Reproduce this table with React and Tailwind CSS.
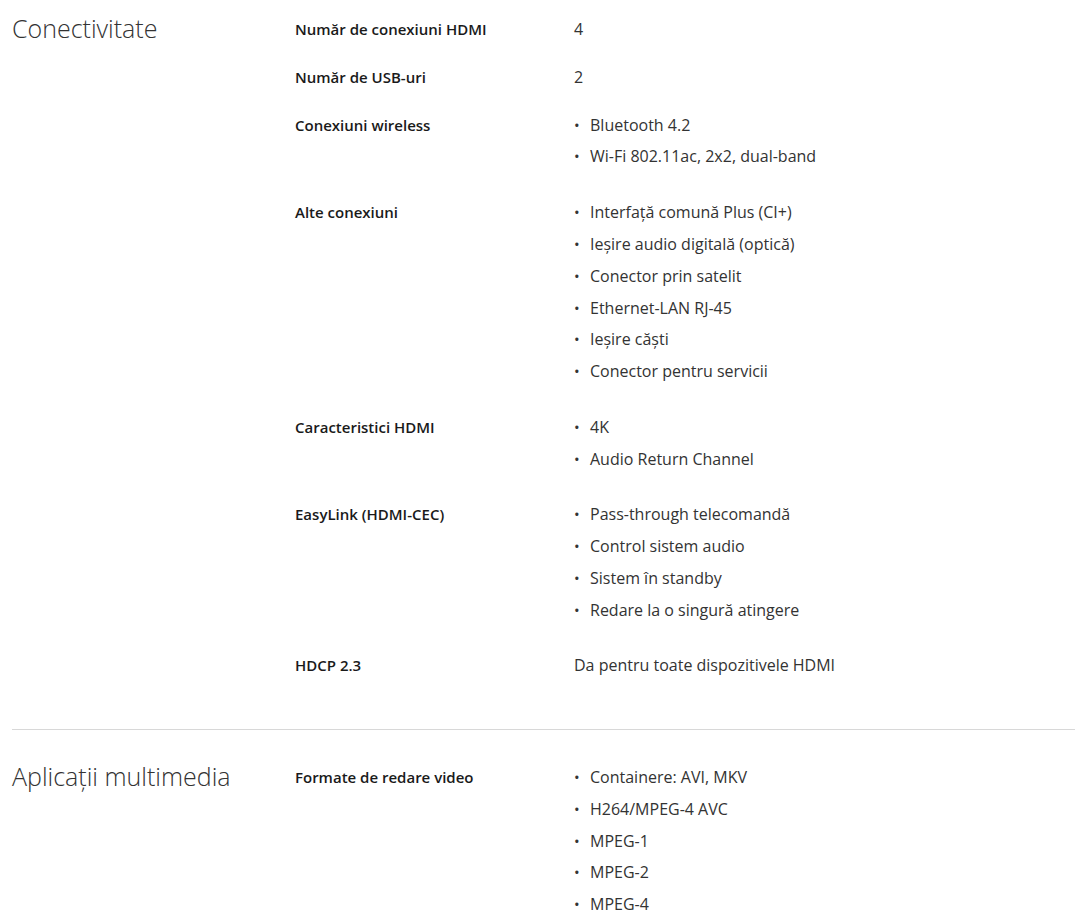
const sections = [
  {
    title: "Conectivitate",
    rows: [
      { label: "Număr de conexiuni HDMI", value: "4" },
      { label: "Număr de USB-uri", value: "2" },
      {
        label: "Conexiuni wireless",
        list: ["Bluetooth 4.2", "Wi-Fi 802.11ac, 2x2, dual-band"],
      },
      {
        label: "Alte conexiuni",
        list: [
          "Interfață comună Plus (CI+)",
          "Ieșire audio digitală (optică)",
          "Conector prin satelit",
          "Ethernet-LAN RJ-45",
          "Ieșire căști",
          "Conector pentru servicii",
        ],
      },
      {
        label: "Caracteristici HDMI",
        list: ["4K", "Audio Return Channel"],
      },
      {
        label: "EasyLink (HDMI-CEC)",
        list: [
          "Pass-through telecomandă",
          "Control sistem audio",
          "Sistem în standby",
          "Redare la o singură atingere",
        ],
      },
      { label: "HDCP 2.3", value: "Da pentru toate dispozitivele HDMI" },
    ],
  },
  {
    title: "Aplicații multimedia",
    rows: [
      {
        label: "Formate de redare video",
        list: [
          "Containere: AVI, MKV",
          "H264/MPEG-4 AVC",
          "MPEG-1",
          "MPEG-2",
          "MPEG-4",
        ],
      },
    ],
  },
];

function SpecRow({ row }) {
  return (
    <div className="flex pb-[23.85px]">
      <div className="w-[279px] shrink-0 text-[15px] leading-6 font-semibold text-[#1a1a1a]">
        {row.label}
      </div>
      <div className="flex-1 text-[16px] leading-6 text-[#333]">
        {row.list ? (
          <ul>
            {row.list.map((item) => (
              <li key={item} className="flex mb-[7.8px]">
                <span className="w-4 shrink-0 text-[15px] text-[#333]">•</span>
                <span>{item}</span>
              </li>
            ))}
          </ul>
        ) : (
          <div>{row.value}</div>
        )}
      </div>
    </div>
  );
}

export default function App() {
  return (
    <div
      className="bg-white min-h-screen pl-3 overflow-hidden"
      style={{ fontFamily: '"Open Sans", "Noto Sans", sans-serif' }}
    >
      {sections.map((section, i) => (
        <div
          key={section.title}
          className={
            i === 0
              ? "flex pt-[17px] pb-7 border-b border-[#d8d8d8] w-[1100px]"
              : "flex pt-[35px]"
          }
        >
          <h2 className="w-[283px] shrink-0 text-[25px] leading-6 font-light text-[#333] -mt-[1px]">
            {section.title}
          </h2>
          <div className="flex-1">
            {section.rows.map((row) => (
              <SpecRow key={row.label} row={row} />
            ))}
          </div>
        </div>
      ))}
    </div>
  );
}
